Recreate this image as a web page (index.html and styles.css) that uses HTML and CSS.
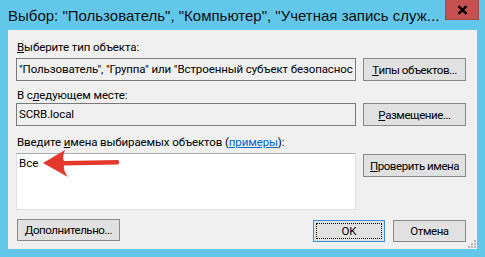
FILE: index.html
```html
<!DOCTYPE html>
<html lang="ru">
<head>
  <meta charset="UTF-8" />
  <title>Выбор</title>
  <link rel="stylesheet" href="styles.css">
</head>
<body>
  <div class="window">
    <div class="titlebar">
      <span class="title">Выбор: "Пользователь", "Компьютер", "Учетная запись служ...</span>
      <button class="close-btn">
        <svg width="11" height="10" viewBox="0 0 11 10"><path d="M1.5 1.2 L9.5 8.8 M9.5 1.2 L1.5 8.8" stroke="#000" stroke-width="2.4" fill="none"/></svg>
      </button>
    </div>

    <div class="client">
      <div class="label l1"><u>В</u>ыберите тип объекта:</div>
      <div class="row">
        <div class="field">"Пользователь", "Группа" или "Встроенный субъект безопаснос</div>
        <button class="btn"><u>Т</u>ипы объектов...</button>
      </div>

      <div class="label l2">В с<u>л</u>едующем месте:</div>
      <div class="row">
        <div class="field">SCRB.local</div>
        <button class="btn"><u>Р</u>азмещение...</button>
      </div>

      <div class="label l3">Введите <u>и</u>мена выбираемых объектов (<a href="#">примеры</a>):</div>
      <div class="row top">
        <div class="names">Все</div>
        <button class="btn"><u>П</u>роверить имена</button>
        <!-- стрелка-подсказка -->
        <svg class="arrow" width="82" height="32" viewBox="0 0 82 32">
          <path d="M1 15 L23 2 Q20 9 22 13 L76 12 Q78.5 14 76 16.5 L22 17.5 Q21 22 26 29 Z" fill="#E4382C"/>
        </svg>
      </div>

      <div class="footer">
        <button class="btn more"><u>Д</u>ополнительно...</button>
        <div class="actions">
          <button class="btn ok"><span class="focus">OK</span></button>
          <button class="btn cancel">Отмена</button>
        </div>
      </div>

      <svg class="grip" width="9" height="9" viewBox="0 0 9 9" fill="#B8B8B8">
        <rect x="7" y="1" width="2" height="2"/>
        <rect x="4" y="4" width="2" height="2"/><rect x="7" y="4" width="2" height="2"/>
        <rect x="1" y="7" width="2" height="2"/><rect x="4" y="7" width="2" height="2"/><rect x="7" y="7" width="2" height="2"/>
      </svg>
    </div>
  </div>
</body>
</html>
```

FILE: styles.css
```css
body {
  margin: 0;
  background: #63C7EA;
  font-family: Roboto, "Liberation Sans", sans-serif;
  font-size: 11.5px;
  color: #000;
}
.window {
  width: 485px;
  height: 257px;
  display: flex;
  flex-direction: column;
}
.titlebar {
  height: 30px;
  display: flex;
  align-items: flex-start;
  justify-content: space-between;
  padding: 0 6px 0 8px;
}
.title {
  font-family: "Liberation Sans", sans-serif;
  font-size: 15px;
  line-height: 15px;
  margin-top: 8px;
  color: #111;
  white-space: nowrap;
}
.close-btn {
  width: 34px;
  height: 20px;
  padding: 0;
  border: 1px solid #A34545;
  border-top: none;
  background: #C75050;
  display: flex;
  align-items: center;
  justify-content: center;
}
.client {
  position: relative;
  margin: 0 8px;
  height: 219px;
  background: #F0F0F0;
  padding: 0 11px 0 8px;
  box-sizing: border-box;
}
.label {
  padding-left: 1px;
  line-height: 14px;
  height: 14px;
  white-space: nowrap;
  letter-spacing: -0.1px;
}
.l1 {
  margin: 10px 0 4px;
}
.l2 {
  margin: 7px 0 1px;
}
.l3 {
  margin: 9px 0 4px;
}
.label a {
  color: #0066CC;
}
.row {
  position: relative;
  display: grid;
  grid-template-columns: 340px 103px;
  gap: 7px;
  align-items: start;
}
.field {
  height: 23px;
  box-sizing: border-box;
  border: 1px solid #7A7A7A;
  background: #F0F0F0;
  padding: 0 0 0 2px;
  line-height: 21px;
  white-space: nowrap;
  overflow: hidden;
  letter-spacing: -0.1px;
}
.names {
  height: 57px;
  box-sizing: border-box;
  background: #fff;
  border: 1px solid #DCDFE6;
  border-top-color: #ABADB3;
  padding: 2px 2px;
  line-height: 15px;
}
.btn {
  height: 23px;
  box-sizing: border-box;
  border: 1px solid #8A8A8A;
  background: #E1E1E1;
  font-family: inherit;
  font-size: 11.5px;
  letter-spacing: -0.45px;
  color: #000;
  padding: 0;
  white-space: nowrap;
  display: flex;
  align-items: center;
  justify-content: center;
}
.row.top .btn {
  margin-top: 1px;
}
.arrow {
  position: absolute;
  left: 26px;
  top: -5px;
}
.footer {
  display: flex;
  justify-content: space-between;
  margin-top: 9px;
}
.more {
  width: 103px;
  height: 22px;
  margin-left: 1px;
}
.actions {
  display: flex;
  gap: 8px;
  margin-top: 1px;
}
.ok {
  width: 72px;
  height: 22px;
  border-color: #3C8DD8;
  padding: 2px;
  letter-spacing: 0;
}
.ok .focus {
  width: 100%;
  height: 100%;
  box-sizing: border-box;
  border: 1px dotted #000;
  display: flex;
  align-items: center;
  justify-content: center;
}
.cancel {
  width: 73px;
  height: 22px;
}
.grip {
  position: absolute;
  right: 1px;
  bottom: 1px;
}
```
